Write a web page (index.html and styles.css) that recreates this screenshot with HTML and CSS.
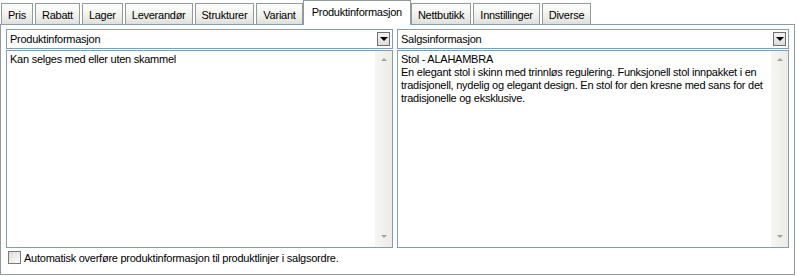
FILE: index.html
```html
<!DOCTYPE html>
<html lang="no">

<head>
    <meta charset="UTF-8">
    <title>Produktinformasjon</title>
    <link rel="stylesheet" href="styles.css">
</head>

<body>

    <div class="tabs">
        <div class="tab">Pris</div>
        <div class="tab">Rabatt</div>
        <div class="tab">Lager</div>
        <div class="tab">Leverandør</div>
        <div class="tab">Strukturer</div>
        <div class="tab">Variant</div>
        <div class="tab active">Produktinformasjon</div>
        <div class="tab">Nettbutikk</div>
        <div class="tab">Innstillinger</div>
        <div class="tab">Diverse</div>
    </div>

    <div class="panel">
        <div class="columns">
            <div class="column">
                <div class="combo">
                    <span class="combo-text">Produktinformasjon</span>
                    <span class="combo-btn"></span>
                </div>
                <div class="memo">
                    <div class="memo-text">Kan selges med eller uten skammel</div>
                    <div class="scrollbar">
                        <span class="arrow up"></span>
                        <span class="arrow down"></span>
                    </div>
                </div>
            </div>

            <div class="column">
                <div class="combo">
                    <span class="combo-text">Salgsinformasjon</span>
                    <span class="combo-btn"></span>
                </div>
                <div class="memo">
                    <div class="memo-text">Stol - ALAHAMBRA<br>En elegant stol i skinn med trinnløs regulering. Funksjonell stol innpakket i en<br>tradisjonell, nydelig og elegant design. En stol for den kresne med sans for det<br>tradisjonelle og eksklusive.</div>
                    <div class="scrollbar">
                        <span class="arrow up"></span>
                        <span class="arrow down"></span>
                    </div>
                </div>
            </div>
        </div>

        <label class="check">
            <span class="box"></span>
            Automatisk overføre produktinformasjon til produktlinjer i salgsordre.
        </label>
    </div>

</body>

</html>
```

FILE: styles.css
```css
:root {
    --tab-border: #919b9c;
    --field-border: #7f9db9;
    --text-color: #000;
}

* {
    margin: 0;
    padding: 0;
    box-sizing: border-box;
}

body {
    font-family: 'Liberation Sans', Arial, sans-serif;
    font-size: 11px;
    letter-spacing: -0.25px;
    color: var(--text-color);
    background: #fff;
    width: 797px;
    height: 276px;
    overflow: hidden;
}

.tabs {
    display: flex;
    align-items: flex-end;
    height: 24px;
    padding-left: 1px;
    position: relative;
    z-index: 1;
}

.tab {
    height: 21px;
    line-height: 22px;
    padding: 0 6px;
    margin-right: 2px;
    border: 1px solid var(--tab-border);
    border-bottom: none;
    background: linear-gradient(#fefefe, #f0f0ea 60%, #dedede);
    white-space: nowrap;
}

.tab.active {
    height: 25px;
    line-height: 22px;
    margin-bottom: -1px;
    padding: 0 8px;
    background: #fff;
    margin-left: -2px;
    margin-right: 0;
}

.panel {
    border: 1px solid var(--tab-border);
    height: 251px;
    width: 795px;
    padding: 4px 5px 0 5px;
}

.columns {
    display: grid;
    grid-template-columns: 387px 392px;
    gap: 4px;
}

.column {
    display: flex;
    flex-direction: column;
    gap: 1px;
}

.combo {
    height: 20px;
    border: 1px solid var(--field-border);
    display: flex;
    align-items: center;
    justify-content: space-between;
    padding: 0 2px 0 3px;
}

.combo-btn {
    width: 13px;
    height: 14px;
    border: 1px solid #6f6f6f;
    background: linear-gradient(#f4f4f4, #dcdcdc);
    position: relative;
}

.combo-btn::after {
    content: "";
    position: absolute;
    left: 2px;
    top: 4px;
    border-left: 4px solid transparent;
    border-right: 4px solid transparent;
    border-top: 4px solid #000;
}

.memo {
    height: 198px;
    border: 1px solid var(--field-border);
    display: flex;
}

.memo-text {
    flex: 1;
    padding: 2px 3px;
    line-height: 13px;
    white-space: nowrap;
}

.scrollbar {
    width: 17px;
    background: linear-gradient(90deg, #f6f6f3, #ecebe6);
    display: flex;
    flex-direction: column;
    justify-content: space-between;
    align-items: center;
    padding: 7px 0 9px;
}

.arrow {
    width: 0;
    height: 0;
    border-left: 3px solid transparent;
    border-right: 3px solid transparent;
}

.arrow.up {
    border-bottom: 3px solid #a2a2a2;
}

.arrow.down {
    border-top: 3px solid #a2a2a2;
}

.check {
    display: flex;
    align-items: center;
    gap: 3px;
    margin-top: 3px;
    padding-left: 2px;
}

.box {
    width: 13px;
    height: 13px;
    border: 1px solid #7a7a7a;
    background: linear-gradient(135deg, #dcdcd7, #fbfbf9);
}
```
